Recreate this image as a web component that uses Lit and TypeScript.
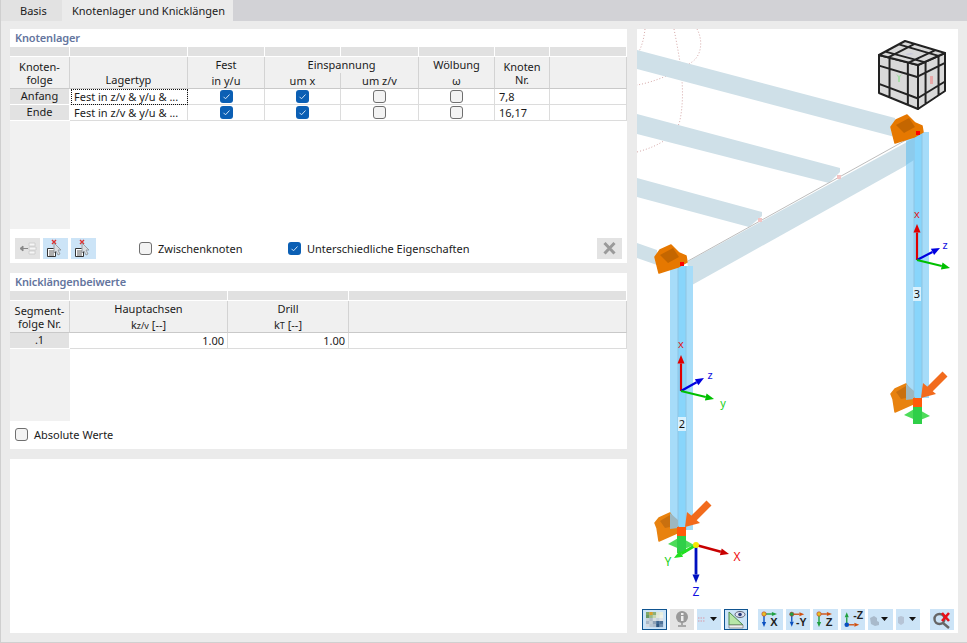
import { css, html, LitElement, svg } from "lit";
import { customElement } from "lit/decorators.js";

type Pt = [number, number];

const lerp = (a: Pt, b: Pt, t: number): Pt => [a[0] + (b[0] - a[0]) * t, a[1] + (b[1] - a[1]) * t];

// a cube face is a quad, its dark bands are lines at fractions along both sides
function cubeFace(a: Pt, b: Pt, c: Pt, d: Pt, us: number[], vs: number[]) {
  let p = `M${a}L${b}L${c}L${d}Z`;
  for (const u of us) p += `M${lerp(a, b, u)}L${lerp(d, c, u)}`;
  for (const v of vs) p += `M${lerp(a, d, v)}L${lerp(b, c, v)}`;
  return svg`<path d=${p} fill="#d9d9d9" stroke="#222" stroke-width="2" stroke-linejoin="round" />`;
}

function arrow(x1: number, y1: number, x2: number, y2: number, color: string, w = 2.2, head = 5) {
  const dx = x2 - x1;
  const dy = y2 - y1;
  const l = Math.hypot(dx, dy);
  const ux = dx / l;
  const uy = dy / l;
  const bx = x2 - ux * head * 1.7;
  const by = y2 - uy * head * 1.7;
  return svg`<line x1=${x1} y1=${y1} x2=${bx} y2=${by} stroke=${color} stroke-width=${w} />
    <polygon points="${x2},${y2} ${bx - uy * head * 0.7},${by + ux * head * 0.7} ${bx + uy * head * 0.7},${by - ux * head * 0.7}" fill=${color} />`;
}

const topSupport = (dx: number, dy: number) => svg`<g transform="translate(${dx} ${dy})">
  <polygon points="891,127 896,120 907,115 915,123 922,126 923,132 914,137 895,143 893,135" fill="#e67800"
    stroke="#e67800" stroke-width="1.500" stroke-linejoin="round" />
  <polygon points="896,125 909,118 915,127 904,133" fill="#c46600" />
</g>`;

const footSupport = (dx: number, dy: number) => svg`<g transform="translate(${dx} ${dy})">
  <polygon points="655,523 659,518 670,513 678,527 677,533 659,541 657,528" fill="#e8820f"
    stroke="#e8820f" stroke-width="1.500" stroke-linejoin="round" />
  <polygon points="660,521 670,515 670,527 665,528" fill="#c9700f" />
  <polygon points="670,513 678,520 678,528 670,529" fill="#9db7bf" />
  <polygon points="668,544 680,537 694,545 682,550" fill="#4ddc5a" />
  <rect x="677" y="536" width="9" height="17" fill="#2fcf48" />
  <line x1="709" y1="503" x2="692" y2="520" stroke="#f26b1d" stroke-width="7" />
  <polygon points="685,527 687,512 700,523" fill="#f26b1d" />
  <rect x="677" y="527" width="9" height="9" fill="#ff5a0a" />
</g>`;

const column = (x: number, y1: number, y2: number) => svg`
  <rect x=${x} y=${y1} width="23" height=${y2 - y1} fill="#a6dcf9" />
  <rect x=${x + 8} y=${y1} width="8" height=${y2 - y1} fill="#88d5fb" />
  <path d="M${x + 8} ${y1}V${y2}M${x + 16} ${y1}V${y2}" stroke="#8fc4e2" stroke-width="1" />`;

const memberLabel = (x: number, y: number, t: string) => svg`
  <rect x=${x - 4} y=${y - 7} width="8" height="14" fill="#d9f1fd" />
  <text x=${x} y=${y + 4} class="num">${t}</text>`;

const axisIcon = (a: string, b: string, dot: string, label: string, up = false) => html`<svg
  viewBox="0 0 25 21" width="25" height="21">
  ${up
    ? svg`${arrow(6, 15, 6, 3, a, 1.4, 3)}${arrow(6, 16, 19, 16, b, 1.4, 3)}<circle cx="6" cy="16" r="2.4" fill=${dot} />`
    : svg`${arrow(6, 5, 19, 5, b, 1.4, 3)}${arrow(6, 5, 6, 18, a, 1.4, 3)}<circle cx="6" cy="5" r="2.2" fill=${dot} stroke="#b33" stroke-width=".6" />`}
  <text x=${up ? 18 : 16} y=${up ? 10 : 17} text-anchor="middle" font-size="11" font-weight="700" fill="#222"
    font-family="Liberation Sans Narrow, Liberation Sans, sans-serif">${label}</text>
</svg>`;

const caret = svg`<polygon points="13,8 20,8 16.500,12" fill="#111" />`;

const docCursor = html`<svg viewBox="0 0 25 21" width="25" height="21">
  <path d="M4.500 10.500h6l2 2v6h-8z" fill="#fff" stroke="#333" />
  <path d="M6 13h5M6 15h5M6 17h5" stroke="#333" stroke-width=".8" />
  <path d="M9 2l4 4M13 2l-4 4" stroke="#d33" stroke-width="1.400" />
  <path d="M11 5l7 7h-3l2 4-2 1-2-4-2 2z" fill="#d8dde2" stroke="#8a8f94" stroke-width=".8" />
</svg>`;

// colours of the little render thumbnail on the first toolbar button
const mosaic = [
  ["#7fa86a", "#d9a02a", "#8cb07a", "#dfe6d2", "#e8eede"],
  ["#6a9a64", "#9ab98a", "#c7d6b2", "#e3e8d8", "#eef1e6"],
  ["#c8d2d8", "#b0bcc8", "#d8dee2", "#c9d2da", "#dfe3e6"],
  ["#aab8c6", "#c4ced6", "#8fa2b6", "#3f6690", "#4d7299"],
  ["#d2d9df", "#b9c5d2", "#aebccb", "#2f5680", "#6f8eae"],
];

@customElement("app-root")
class AppRoot extends LitElement {
  render() {
    return html`
      <div class="tabs">
        <div class="tab">Basis</div>
        <div class="tab active">Knotenlager und Knicklängen</div>
      </div>
      <div class="body">
        <div class="left">
          ${this.renderSupports()} ${this.renderFactors()}
          <section class="notes"></section>
        </div>
        ${this.renderView()}
      </div>
    `;
  }

  renderCheck(on: boolean) {
    return html`<span class="check ${on ? "on" : ""}">
      ${on
        ? html`<svg viewBox="0 0 13 13" width="13" height="13">
            <path d="M3.500 6.800l2 2 4-4.300" fill="none" stroke="#cfe2f5" stroke-width="1" />
          </svg>`
        : ""}
    </span>`;
  }

  renderSupports() {
    const rows = [
      ["Anfang", "7,8"],
      ["Ende", "16,17"],
    ];
    return html`<section class="supports">
      <h2>Knotenlager</h2>
      <div class="grid g1">
        ${Array.from({ length: 8 }, () => html`<div class="band"></div>`)}
        <div class="hd span2 bottom">Knoten-<br />folge</div>
        <div class="hd span2 bottom">Lagertyp</div>
        <div class="hd">Fest</div>
        <div class="hd wide">Einspannung</div>
        <div class="hd">Wölbung</div>
        <div class="hd span2 bottom">Knoten<br />Nr.</div>
        <div class="hd span2"></div>
        <div class="hd low">in y/u</div>
        <div class="hd low">um x</div>
        <div class="hd low">um z/v</div>
        <div class="hd low">ω</div>
        ${rows.map(
          ([name, nodes], i) => html`
            <div class="rowhead">${name}</div>
            <div class="cell text ${i === 0 ? "focus" : ""}"><span>Fest in z/v &amp; y/u &amp; ...</span></div>
            <div class="cell">${this.renderCheck(true)}</div>
            <div class="cell">${this.renderCheck(true)}</div>
            <div class="cell">${this.renderCheck(false)}</div>
            <div class="cell">${this.renderCheck(false)}</div>
            <div class="cell text">${nodes}</div>
            <div class="cell"></div>
          `,
        )}
        <div class="strip"></div>
      </div>
      <div class="actions">
        <span class="btn grey">
          <svg viewBox="0 0 25 21" width="25" height="21">
            <path d="M14 5h6v3h-6zM14 13h6v3h-6zM14 9h7v3h-7z" fill="#f6f6f6" stroke="#c9c9c9" stroke-width=".8" />
            <path d="M13 10.500H8M8 8l-3 2.500L8 13z" fill="#888" stroke="#888" />
          </svg>
        </span>
        <span class="btn blue">${docCursor}</span>
        <span class="btn blue">${docCursor}</span>
        <label class="opt first">${this.renderCheck(false)}Zwischenknoten</label>
        <label class="opt second">${this.renderCheck(true)}Unterschiedliche Eigenschaften</label>
        <span class="btn grey close">
          <svg viewBox="0 0 25 21" width="25" height="21">
            <path d="M7.500 5l10 10.500M17.500 5l-10 10.500" stroke="#9a9a9a" stroke-width="3" />
          </svg>
        </span>
      </div>
    </section>`;
  }

  renderFactors() {
    return html`<section class="factors">
      <h2>Knicklängenbeiwerte</h2>
      <div class="grid g2">
        ${Array.from({ length: 4 }, () => html`<div class="band"></div>`)}
        <div class="hd span2 bottom">Segment-<br />folge Nr.</div>
        <div class="hd">Hauptachsen</div>
        <div class="hd">Drill</div>
        <div class="hd span2"></div>
        <div class="hd low">k<small>z/v</small> [--]</div>
        <div class="hd low">k<small>T</small> [--]</div>
        <div class="rowhead">.1</div>
        <div class="cell value">1.00</div>
        <div class="cell value">1.00</div>
        <div class="cell"></div>
        <div class="strip"></div>
      </div>
      <label class="opt abs">${this.renderCheck(false)}Absolute Werte</label>
    </section>`;
  }

  renderView() {
    return html`<section class="view">
      <svg class="scene" viewBox="637 29 321 576" width="321" height="576">
        <g fill="none" stroke="#d6a9a9" stroke-width="1" stroke-dasharray="1 2">
          <path d="M645 29C644 38 642 47 637 55" />
          <path d="M674 29C680 60 686 90 680 120C677 135 660 146 637 152" />
          <path d="M697 29C703 40 702 55 692 62C678 72 655 82 637 85" />
        </g>
        <g fill="#cfe0e8">
          <polygon points="637,50 895,118 895,137 637,69" />
          <polygon points="637,114 840,168 840,172 829,183 637,134" />
          <polygon points="637,178 762,212 762,216 749,227 637,197" />
          <polygon points="637,243 657,250 657,265 637,258" />
          <polygon points="687,262 907,142 907,165 692,285" />
        </g>
        <line x1="688" y1="261" x2="906" y2="140" stroke="#bdbdbd" stroke-width="1" />
        <rect x="837" y="175" width="4" height="4" fill="#f2c4c4" />
        <rect x="758" y="218" width="4" height="4" fill="#f2c4c4" />
        ${column(670, 266, 530)} ${column(906, 132, 398)}
        <polygon points="906,142 914,138 914,160 906,165" fill="#8ccbec" />
        ${topSupport(0, 0)} ${topSupport(-236, 130)}
        <rect x="916" y="131" width="4" height="4" fill="#f00" />
        <rect x="680" y="262" width="4" height="4" fill="#f00" />
        ${memberLabel(917, 294, "3")} ${memberLabel(682, 424, "2")}
        ${footSupport(0, 0)} ${footSupport(236, -129)}

        ${cubeFace([879, 55], [918, 65], [918, 109], [879, 93], [0.27, 0.74], [0.28, 0.76])}
        ${cubeFace([918, 65], [945, 53], [945, 91], [918, 109], [0.28, 0.76], [0.26, 0.75])}
        ${cubeFace([879, 55], [905, 41], [945, 53], [918, 65], [0.24, 0.76], [0.24, 0.76])}
        <path d="M896 74l3 2 3-2-2 3v5h-2v-5z" fill="#a8dca8" />
        <rect x="930" y="76" width="3" height="8" fill="#e8a8a8" />
        <path d="M905 54l6-1 3 1-6 1z" fill="#c8c8dc" />

        ${arrow(917, 260, 917, 224, "#e00000")} ${arrow(917, 260, 940, 248, "#0000e0")}
        ${arrow(917, 260, 950, 268, "#00c000")}
        <text x="917" y="218" class="ax" fill="#e02020">x</text>
        <text x="945" y="249" class="ax" fill="#1010e0">z</text>
        ${arrow(681, 391, 681, 355, "#e00000")} ${arrow(681, 391, 704, 378, "#0000e0")}
        ${arrow(681, 391, 714, 399, "#00c000")}
        <text x="681" y="348" class="ax" fill="#e02020">x</text>
        <text x="710" y="379" class="ax" fill="#1010e0">z</text>
        <text x="723" y="407" class="ax" fill="#20d020">y</text>

        ${arrow(696, 545, 729, 554, "#c80000", 2.4, 5)} ${arrow(696, 545, 674, 558, "#20e020", 3, 5)}
        ${arrow(696, 545, 696, 583, "#0010c0", 2.8, 5)}
        <circle cx="696" cy="545" r="3" fill="#f4e800" />
        <text x="737" y="561" class="ax big" fill="#f01010">X</text>
        <text x="668" y="566" class="ax big" fill="#20d020">Y</text>
        <text x="696" y="596" class="ax big" fill="#1010e0">Z</text>
      </svg>
      <div class="tools">
        <span class="tool w25 active">
          <svg viewBox="0 0 23 19" width="23" height="19">
            ${mosaic.map((row, y) =>
              row.map((c, x) => svg`<rect x=${3 + x * 3.4} y=${2 + y * 3} width="3.500" height="3.100" fill=${c} />`),
            )}
          </svg>
        </span>
        <span class="tool grey">
          <svg viewBox="0 0 24 21" width="24" height="21">
            <path d="M8 16h8v2H8zM11 12h2v4h-2z" fill="#a8a8a8" />
            <circle cx="12" cy="8" r="6" fill="#999" />
            <path d="M11 4h2.500v2H11zM11 7h2.500v5H11z" fill="#eee" />
          </svg>
        </span>
        <span class="tool">
          <svg viewBox="0 0 24 21" width="24" height="21">
            <path d="M1 9h7M1 12h7" stroke="#d89aa8" stroke-dasharray="1.500 1" />
            ${caret}
          </svg>
        </span>
        <span class="tool active">
          <svg viewBox="0 0 22 19" width="22" height="19">
            <path d="M4 2l14 13H4z" fill="#b7e6a8" stroke="#4a8a4a" />
            <path d="M4 15h14v3H4z" fill="#eee" stroke="#777" stroke-width=".7" />
            <ellipse cx="15" cy="4.500" rx="5" ry="3" fill="#dfe4f2" stroke="#445" stroke-width=".8" />
            <circle cx="15" cy="4.500" r="1.800" fill="#2a3a78" />
          </svg>
        </span>
        <span class="tool w25 gap">${axisIcon("#0a50c0", "#20a040", "#e8c020", "X")}</span>
        <span class="tool">${axisIcon("#0a50c0", "#d05010", "#20a040", "-Y")}</span>
        <span class="tool w25">${axisIcon("#20a040", "#d05010", "#e8c020", "Z")}</span>
        <span class="tool">${axisIcon("#20a040", "#d05010", "#0a50c0", "-Z", true)}</span>
        <span class="tool w25">
          <svg viewBox="0 0 25 21" width="25" height="21">
            <path d="M2 9l4-2 3 2v3l2 1v3l-4 1-4-2z" fill="#a9bacb" />
            ${caret}
          </svg>
        </span>
        <span class="tool">
          <svg viewBox="0 0 24 21" width="24" height="21">
            <path d="M2 8l3-1 3 1v6l-3 2-3-2z" fill="#b6c4d6" />
            ${caret}
          </svg>
        </span>
        <span class="tool gap">
          <svg viewBox="0 0 24 21" width="24" height="21">
            <circle cx="9.500" cy="10" r="5" fill="none" stroke="#666" stroke-width="2.400" />
            <path d="M13 14l6 5" stroke="#666" stroke-width="2.400" />
            <path d="M12 4l7 8M19 4l-7 8" stroke="#e8101a" stroke-width="2.600" />
          </svg>
        </span>
      </div>
    </section>`;
  }

  static styles = css`
    :host {
      display: block;
      width: 967px;
      height: 643px;
      box-sizing: border-box;
      background: #ebebeb;
      border-left: 1px solid #cfcfcf;
      border-bottom: 1px solid #d0d0d0;
      font-family: "Noto Sans", "Open Sans", sans-serif;
      font-size: 11px;
      color: #1b1b1b;
      overflow: hidden;
    }
    .tabs {
      display: flex;
      height: 21px;
      background: #d2d2d6;
    }
    .tab {
      display: flex;
      align-items: center;
      box-sizing: border-box;
      width: 61px;
      padding-left: 19px;
      background: #e2e2e2;
    }
    .tab.active {
      width: 171px;
      padding-left: 10px;
      background: #ebebeb;
    }
    .body {
      display: flex;
      gap: 10px;
      padding: 8px 9px 0 9px;
    }
    .left {
      display: flex;
      flex-direction: column;
      gap: 10px;
      width: 617px;
    }
    section {
      background: #fff;
    }
    .supports {
      height: 234px;
    }
    .factors {
      height: 176px;
    }
    .notes {
      height: 174px;
    }
    h2 {
      margin: 0;
      height: 18px;
      padding-left: 5px;
      font-size: 11px;
      line-height: 18px;
      font-weight: 600;
      letter-spacing: -0.15px;
      color: #64759e;
    }
    .grid {
      display: grid;
      line-height: 15px;
    }
    .g1 {
      grid-template-columns: 60px 118px 77px 76px 78px 76px 55px 77px;
      grid-template-rows: 10px 16px 16px 16px 16px 108px;
    }
    .g2 {
      grid-template-columns: 60px 158px 121px 278px;
      grid-template-rows: 10px 16px 16px 16px 72px;
    }
    .band {
      background: #e1e1e1;
      border-right: 1px solid #fff;
      border-bottom: 1px solid #fff;
    }
    .hd {
      background: #f0f0f0;
      text-align: center;
      border-right: 1px solid #d3d3d3;
    }
    .hd small {
      font-size: 9px;
    }
    .low {
      border-bottom: 1px solid #c9c9c9;
    }
    .span2 {
      grid-row: span 2;
      border-bottom: 1px solid #c9c9c9;
    }
    .wide {
      grid-column: span 2;
    }
    .bottom {
      display: flex;
      align-items: flex-end;
      justify-content: center;
      line-height: 13px;
      padding-bottom: 2px;
    }
    .g1 > .hd:first-of-type,
    .g2 > .hd:first-of-type {
      border-right: 0;
      box-shadow: inset -1px 0 #fff;
    }
    .rowhead {
      background: #e2e2e2;
      text-align: center;
      border-right: 1px solid #fff;
      border-bottom: 1px solid #fff;
      line-height: 14px;
    }
    .cell {
      display: flex;
      align-items: center;
      justify-content: center;
      box-sizing: border-box;
      border-right: 1px solid #dcdcdc;
      border-bottom: 1px solid #dcdcdc;
    }
    .cell.text {
      justify-content: flex-start;
      padding-left: 4px;
    }
    .cell.value {
      justify-content: flex-end;
      padding-right: 3px;
    }
    .focus span {
      outline: 1px dotted #111;
      margin-left: -2px;
      padding: 0 2px;
      flex: 1;
      line-height: 14px;
    }
    .strip {
      grid-column: 1;
      background: #f1f1f1;
    }
    .check {
      display: inline-block;
      box-sizing: border-box;
      width: 13px;
      height: 13px;
      flex: none;
      border: 1px solid #6f6f6f;
      border-radius: 3px;
      background: #f3f3f3;
    }
    .check.on {
      border: 0;
      background: #0b5fb4;
    }
    .check svg {
      display: block;
    }
    .actions {
      display: flex;
      align-items: center;
      height: 21px;
      padding: 9px 5px 0 5px;
    }
    .btn {
      display: block;
      width: 25px;
      height: 21px;
      margin-right: 3px;
    }
    .btn svg,
    .tool svg {
      display: block;
    }
    .grey {
      background: #e3e3e3;
    }
    .blue {
      background: #cce4f7;
    }
    .opt {
      display: flex;
      align-items: center;
      gap: 6px;
    }
    .first {
      margin-left: 40px;
      width: 149px;
    }
    .second {
      flex: 1;
    }
    .close {
      margin-right: 0;
    }
    .abs {
      margin: 6px 0 0 5px;
    }
    .view {
      width: 321px;
      height: 604px;
    }
    .scene {
      display: block;
    }
    .scene text {
      font-family: "Noto Sans", sans-serif;
      text-anchor: middle;
    }
    .scene .num {
      font-size: 11px;
      fill: #111;
    }
    .scene .ax {
      font-size: 11px;
    }
    .scene .big {
      font-size: 12px;
    }
    .tools {
      display: flex;
      gap: 3px;
      padding: 4px 0 0 5px;
    }
    .tool {
      display: flex;
      align-items: center;
      justify-content: center;
      box-sizing: border-box;
      width: 24px;
      height: 21px;
      flex: none;
      background: #cce4f7;
    }
    .tool.w25 {
      width: 25px;
    }
    .tool.active {
      border: 1px solid #0f5490;
    }
    .tool.grey {
      background: #e3e3e3;
    }
    .tool.gap {
      margin-left: 7px;
    }
  `;
}
